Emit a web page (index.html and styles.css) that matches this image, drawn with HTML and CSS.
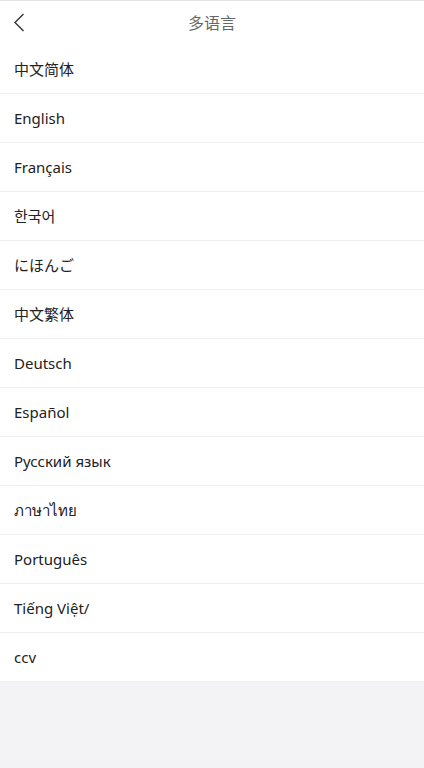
FILE: index.html
```html
<!DOCTYPE html>
<html lang="zh">
<head>
  <meta charset="UTF-8" />
  <meta name="viewport" content="width=device-width, initial-scale=1" />
  <title>多语言</title>
  <link rel="stylesheet" href="styles.css">
</head>
<body>

  <!-- Barre du haut -->
  <header class="top-bar">
    <span class="back">
      <svg width="12" height="19" viewBox="0 0 12 19"><path d="M10.5 1 L2 9.5 L10.5 18" fill="none" stroke="#333" stroke-width="1.4"/></svg>
    </span>
    <h1>多语言</h1>
  </header>

  <!-- Liste des langues -->
  <ul class="lang-list">
    <li>中文简体</li>
    <li>English</li>
    <li>Français</li>
    <li>한국어</li>
    <li>にほんご</li>
    <li>中文繁体</li>
    <li>Deutsch</li>
    <li>Español</li>
    <li>Русский язык</li>
    <li>ภาษาไทย</li>
    <li>Português</li>
    <li>Tiếng Việt/</li>
    <li>ccv</li>
  </ul>

</body>
</html>
```

FILE: styles.css
```css
body {
  font-family: "Noto Sans", "Noto Sans CJK SC", sans-serif;
  margin: 0;
  padding: 0;
  background: #f3f2f4;
}
.top-bar {
  position: relative;
  height: 44px;
  border-top: 1px solid #e4e4e4;
  background: #fff;
  display: flex;
  align-items: center;
  justify-content: center;
}
.top-bar h1 {
  margin: 0 0 3px;
  font-size: 16px;
  font-weight: normal;
  color: #666;
}
.back {
  position: absolute;
  left: 13px;
  top: 12px;
  display: flex;
}
.lang-list {
  list-style: none;
  margin: 0;
  padding: 0;
  background: #fff;
}
.lang-list li {
  height: 48px;
  line-height: 48px;
  padding: 0 14px;
  font-size: 15px;
  color: #222;
  border-bottom: 1px solid #f0f0f0;
}
```
